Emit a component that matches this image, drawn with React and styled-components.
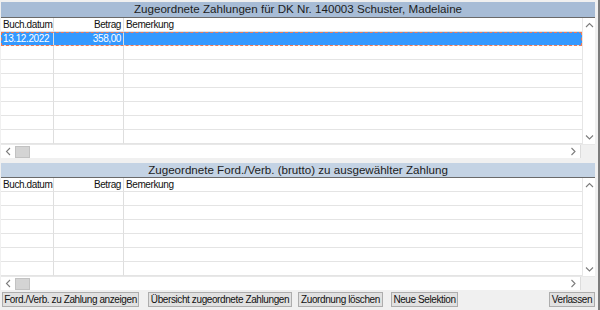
import React from "react";
import styled, { createGlobalStyle } from "styled-components";

const Global = createGlobalStyle`
  html, body { margin: 0; padding: 0; background: #f0f0f0; }
  * { box-sizing: border-box; }
`;

const Window = styled.div`
  width: 600px;
  height: 310px;
  background: #f0f0f0;
  padding: 2px 3px 0 1px;
  border-right: 2px solid #7c7c7c;
  display: flex;
  flex-direction: column;
  font-family: "Liberation Sans", Arial, sans-serif;
  overflow: hidden;
`;

const TitleBar = styled.div`
  height: ${(p) => (p.$first ? 16 : 15)}px;
  background: ${(p) => (p.$active ? "#a7bcd6" : "#c4d3e4")};
  border-bottom: 1px solid #6a6a6a;
  display: flex;
  align-items: center;
  justify-content: center;
  font-size: 11.6px;
  color: #1c1c1c;
  line-height: 1;
  padding-bottom: 1px;
`;

const GridArea = styled.div`
  display: flex;
  background: #fff;
`;

const Table = styled.div`
  flex: 1;
  display: flex;
  flex-direction: column;
`;

const Row = styled.div`
  display: grid;
  grid-template-columns: 53px 70px 1fr;
  height: 14px;
  font-size: 10px;
  letter-spacing: -0.4px;
  line-height: 13px;
  color: ${(p) => (p.$selected ? "#ffffff" : "#101010")};
  background: ${(p) => (p.$selected ? "#3399ff" : "#ffffff")};
  outline: ${(p) => (p.$selected ? "1px dashed #f07a58" : "none")};
  outline-offset: -1px;
`;

const Cell = styled.div`
  padding: 0 2px;
  text-align: ${(p) => (p.$right ? "right" : "left")};
  border-right: ${(p) => (p.$last ? "none" : "1px solid #dedede")};
  border-bottom: 1px solid #e4e4e4;
  white-space: nowrap;
  overflow: hidden;
`;

const VScroll = styled.div`
  width: 13px;
  background: #fff;
  border-left: 1px solid #e6e6e6;
  display: flex;
  flex-direction: column;
  justify-content: space-between;
`;

const ArrowBox = styled.div`
  width: ${(p) => p.$w || 13}px;
  height: 14px;
  display: flex;
  align-items: center;
  justify-content: center;
  flex: none;
`;

const HScrollRow = styled.div`
  display: flex;
  height: 14px;
  border-top: 1px solid #e8e8e8;
`;

const HTrack = styled.div`
  flex: 1;
  display: flex;
  align-items: center;
  background: #fff;
`;

const Thumb = styled.div`
  width: 15px;
  height: 12px;
  background: #d4d4d4;
  border: 1px solid #c2c2c2;
`;

const Spacer = styled.div`
  flex: 1;
`;

const Corner = styled.div`
  width: 15px;
  background: #f0f0f0;
  border-left: 1px solid #dcdcdc;
`;

const Separator = styled.div`
  height: 5px;
  background: #f0f0f0;
`;

const ButtonBar = styled.div`
  display: flex;
  align-items: flex-start;
  margin-top: 2px;
  height: 15px;
  padding-left: 1px;
`;

const Button = styled.button`
  width: ${(p) => p.$w}px;
  margin-left: ${(p) => p.$ml || 0}px;
  height: 15px;
  padding: 0;
  background: #e1e1e1;
  border: 1px solid #adadad;
  font-family: "Liberation Sans", Arial, sans-serif;
  font-size: 10px;
  letter-spacing: -0.4px;
  color: #111;
  line-height: 12px;
  white-space: nowrap;
  display: flex;
  align-items: center;
  justify-content: center;
`;

const Chevron = ({ dir }) => {
  const pts = {
    up: "1,5 4.5,1.5 8,5",
    down: "1,1.5 4.5,5 8,1.5",
    left: "5,1 1.5,4.5 5,8",
    right: "1.5,1 5,4.5 1.5,8",
  }[dir];
  const vertical = dir === "up" || dir === "down";
  return (
    <svg width={vertical ? 9 : 7} height={vertical ? 7 : 9} viewBox={vertical ? "0 0 9 7" : "0 0 7 9"}>
      <polyline points={pts} fill="none" stroke="#7d7d7d" strokeWidth="1.1" />
    </svg>
  );
};

const Panel = ({ title, active, first, rows, data }) => {
  const body = [];
  for (let i = 0; i < rows; i++) {
    const d = data[i];
    body.push(
      <Row key={i} $selected={d && d.selected}>
        <Cell>{d ? d.date : ""}</Cell>
        <Cell $right>{d ? d.amount : ""}</Cell>
        <Cell $last>{d ? d.note : ""}</Cell>
      </Row>
    );
  }
  return (
    <>
      <TitleBar $active={active} $first={first}>{title}</TitleBar>
      <GridArea>
        <Table>
          <Row>
            <Cell>Buch.datum</Cell>
            <Cell $right>Betrag</Cell>
            <Cell $last>Bemerkung</Cell>
          </Row>
          {body}
        </Table>
        <VScroll>
          <ArrowBox><Chevron dir="up" /></ArrowBox>
          <ArrowBox><Chevron dir="down" /></ArrowBox>
        </VScroll>
      </GridArea>
      <HScrollRow>
        <HTrack>
          <ArrowBox $w={14}><Chevron dir="left" /></ArrowBox>
          <Thumb />
          <Spacer />
          <ArrowBox $w={14}><Chevron dir="right" /></ArrowBox>
        </HTrack>
        <Corner />
      </HScrollRow>
    </>
  );
};

export default function App() {
  return (
    <>
      <Global />
      <Window>
        <Panel
          first
          active
          title="Zugeordnete Zahlungen für DK Nr. 140003 Schuster, Madelaine"
          rows={8}
          data={[{ date: "13.12.2022", amount: "358,00", note: "", selected: true }]}
        />
        <Separator />
        <Panel
          title="Zugeordnete Ford./Verb. (brutto) zu ausgewählter Zahlung"
          rows={6}
          data={[]}
        />
        <ButtonBar>
          <Button $w={137}>Ford./Verb. zu Zahlung anzeigen</Button>
          <Button $w={144} $ml={9}>Übersicht zugeordnete Zahlungen</Button>
          <Button $w={85} $ml={6}>Zuordnung löschen</Button>
          <Button $w={67} $ml={8}>Neue Selektion</Button>
          <Spacer />
          <Button $w={46}>Verlassen</Button>
        </ButtonBar>
      </Window>
    </>
  );
}
